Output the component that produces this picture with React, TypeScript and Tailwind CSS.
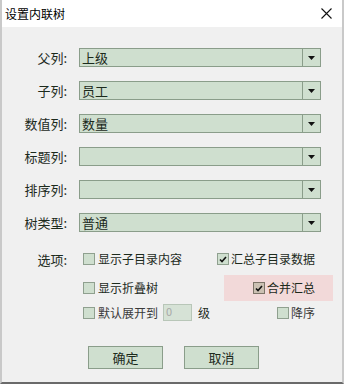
import React from 'react';

const FONT = { fontFamily: '"Noto Sans CJK SC", "Noto Sans", sans-serif' };

type Field = { label: string; value: string };

const fields: Field[] = [
  { label: '父列:', value: '上级' },
  { label: '子列:', value: '员工' },
  { label: '数值列:', value: '数量' },
  { label: '标题列:', value: '' },
  { label: '排序列:', value: '' },
  { label: '树类型:', value: '普通' },
];

function Combo({ value }: { value: string }) {
  return (
    <div className="flex h-[19px] w-[242px] border border-[#8a9d8a] bg-[#cfdfcf]">
      <div className="flex flex-1 items-center pl-[2px] text-[13px] leading-none text-[#1c2a1c]">{value}</div>
      <div className="flex w-[18px] items-center justify-center border-l border-[#8a9d8a]">
        <svg width="7" height="4" viewBox="0 0 7 4">
          <path d="M0 0H7L3.5 4Z" fill="#111" />
        </svg>
      </div>
    </div>
  );
}

function Check({ checked, tan }: { checked?: boolean; tan?: boolean }) {
  return (
    <div
      className={`flex h-[12px] w-[12px] shrink-0 items-center justify-center border ${
        tan ? 'border-[#7c7468] bg-[#cbc1b3]' : 'border-[#8fa08f] bg-[#cfdfcf]'
      }`}
    >
      {checked && (
        <svg width="8" height="7" viewBox="0 0 8 7">
          <path d="M1 3.5L3 5.5L7 1" fill="none" stroke="#111" strokeWidth="1.6" />
        </svg>
      )}
    </div>
  );
}

export default function App() {
  return (
    <div className="flex h-[384px] w-[344px] flex-col border-x-2 border-b-2 border-x-[#c9c9c9] border-b-[#6a6a6a] text-[#1c2a1c]" style={FONT}>
      {/* Title bar */}
      <div className="flex h-[27px] shrink-0 items-center justify-between bg-white pl-[3px] pr-[10px]">
        <span className="text-[12px] leading-none text-black">设置内联树</span>
        <svg width="11" height="11" viewBox="0 0 11 11">
          <path d="M0.5 0.5L10.5 10.5M10.5 0.5L0.5 10.5" stroke="#111" strokeWidth="1.1" />
        </svg>
      </div>

      <div className="flex flex-1 flex-col bg-[#f0f0f0] pt-[21px]">
        <div className="flex flex-col gap-[14px]">
          {fields.map((f) => (
            <div key={f.label} className="flex items-center">
              <div className="w-[65px] text-right text-[13px] leading-none">{f.label}</div>
              <div className="ml-[12px]">
                <Combo value={f.value} />
              </div>
            </div>
          ))}
        </div>

        {/* Options */}
        <div className="mt-[18px] flex flex-col text-[12px] leading-none">
          <div className="flex h-[18px] items-center">
            <div className="w-[65px] text-right text-[13px]">选项:</div>
            <div className="ml-[16px] flex w-[134px] items-center gap-[3px]">
              <Check />
              <span>显示子目录内容</span>
            </div>
            <div className="flex items-center gap-[2px]">
              <Check checked />
              <span>汇总子目录数据</span>
            </div>
          </div>

          <div className="mt-[7px] flex h-[26px] items-center">
            <div className="ml-[81px] flex w-[134px] items-center gap-[3px]">
              <Check />
              <span>显示折叠树</span>
            </div>
            <div className="ml-[7px] flex h-[26px] w-[109px] items-center gap-[2px] bg-[#f2d9d9] pl-[29px]">
              <Check checked tan />
              <span>合并汇总</span>
            </div>
          </div>

          <div className="mt-[3px] flex h-[17px] items-center">
            <div className="ml-[81px] flex items-center gap-[3px] text-[#3a3a3a]">
              <Check />
              <span>默认展开到</span>
            </div>
            <div className="ml-[5px] flex h-[17px] w-[29px] items-start border border-[#b8c6b8] bg-[#d6e2d6] pl-[2px] pt-[1px] text-[11px] text-[#a8a8a8]">
              0
            </div>
            <span className="ml-[6px]">级</span>
            <div className="ml-[67px] flex items-center gap-[2px] text-[#3a3a3a]">
              <Check />
              <span>降序</span>
            </div>
          </div>
        </div>

        {/* Buttons */}
        <div className="mt-[25px] flex gap-[21px] pl-[86px]">
          <button className="h-[23px] w-[75px] border border-[#8a9d8a] bg-[#cfdfcf] text-[13px] leading-none text-[#1c2a1c]">确定</button>
          <button className="h-[23px] w-[75px] border border-[#8a9d8a] bg-[#cfdfcf] text-[13px] leading-none text-[#1c2a1c]">取消</button>
        </div>
      </div>
    </div>
  );
}
